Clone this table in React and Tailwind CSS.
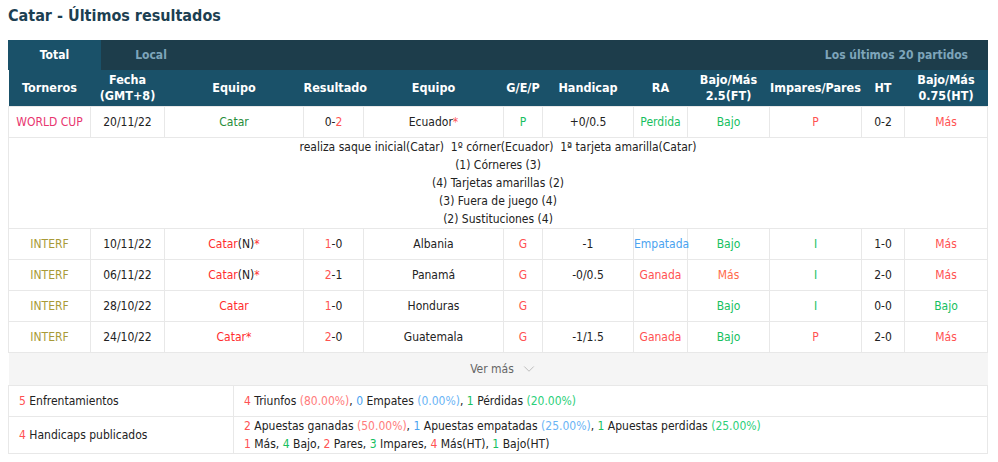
import React from "react";
import { ChevronDown } from "lucide-react";

const cols = [82, 74, 139, 60, 140, 39, 91, 54, 82, 92, 43, 83];

const heads = [
  ["Torneros"],
  ["Fecha", "(GMT+8)"],
  ["Equipo"],
  ["Resultado"],
  ["Equipo"],
  ["G/E/P"],
  ["Handicap"],
  ["RA"],
  ["Bajo/Más", "2.5(FT)"],
  ["Impares/Pares"],
  ["HT"],
  ["Bajo/Más", "0.75(HT)"],
];

const red = "text-[#ff5252]";
const green = "text-[#16c060]";
const blue = "text-[#4aa3f0]";

const rows = [
  {
    liga: "INTERF",
    fecha: "10/11/22",
    home: (
      <>
        <span className="text-[#ff2d2d]">Catar</span>
        <span>(N)</span>
        <span className="text-[#ff2d2d]">*</span>
      </>
    ),
    res: ["1", "0"],
    away: "Albania",
    gep: "G",
    hcp: "-1",
    ra: ["Empatada", blue],
    ou: ["Bajo", green],
    ip: ["I", green],
    ht: "1-0",
    ouht: ["Más", red],
  },
  {
    liga: "INTERF",
    fecha: "06/11/22",
    home: (
      <>
        <span className="text-[#ff2d2d]">Catar</span>
        <span>(N)</span>
        <span className="text-[#ff2d2d]">*</span>
      </>
    ),
    res: ["2", "1"],
    away: "Panamá",
    gep: "G",
    hcp: "-0/0.5",
    ra: ["Ganada", red],
    ou: ["Más", "text-[#ff6a4a]"],
    ip: ["I", green],
    ht: "2-0",
    ouht: ["Más", red],
  },
  {
    liga: "INTERF",
    fecha: "28/10/22",
    home: <span className="text-[#ff2d2d]">Catar</span>,
    res: ["1", "0"],
    away: "Honduras",
    gep: "G",
    hcp: "",
    ra: ["", ""],
    ou: ["Bajo", green],
    ip: ["I", green],
    ht: "0-0",
    ouht: ["Bajo", green],
  },
  {
    liga: "INTERF",
    fecha: "24/10/22",
    home: (
      <>
        <span className="text-[#ff2d2d]">Catar</span>
        <span className="text-[#ff2d2d]">*</span>
      </>
    ),
    res: ["2", "0"],
    away: "Guatemala",
    gep: "G",
    hcp: "-1/1.5",
    ra: ["Ganada", red],
    ou: ["Bajo", green],
    ip: ["P", red],
    ht: "2-0",
    ouht: ["Más", red],
  },
];

const td = "border border-[#e8e8e8] text-center h-[31px] p-0";

function Row({ r }) {
  return (
    <tr>
      <td className={`${td} text-[#a89a38]`}>{r.liga}</td>
      <td className={td}>{r.fecha}</td>
      <td className={td}>{r.home}</td>
      <td className={td}>
        <span className={red}>{r.res[0]}</span>-{r.res[1]}
      </td>
      <td className={td}>{r.away}</td>
      <td className={`${td} ${red}`}>{r.gep}</td>
      <td className={td}>{r.hcp}</td>
      <td className={`${td} ${r.ra[1]}`}>{r.ra[0]}</td>
      <td className={`${td} ${r.ou[1]}`}>{r.ou[0]}</td>
      <td className={`${td} ${r.ip[1]}`}>{r.ip[0]}</td>
      <td className={td}>{r.ht}</td>
      <td className={`${td} ${r.ouht[1]}`}>{r.ouht[0]}</td>
    </tr>
  );
}

export default function App() {
  return (
    <div className="w-[998px] h-[462px] bg-white text-[12px] text-[#222] font-['DejaVu_Sans_Condensed','DejaVu_Sans',sans-serif] font-stretch-condensed overflow-hidden">
      <div className="px-2 pt-[5px]">
        <h2 className="text-[16px] font-bold text-[#1c3f52] h-[35px] leading-[22px]">
          Catar - Últimos resultados
        </h2>

        <div className="w-[980px]">
          {/* Tabs */}
          <div className="flex h-[30px] bg-[#1d3d4b] font-bold text-[12px] items-stretch">
            <div className="w-[93px] bg-[#1a5169] text-white flex items-center justify-center">
              Total
            </div>
            <div className="w-[100px] text-[#7ea5ba] flex items-center justify-center">
              Local
            </div>
            <div className="flex-1 text-[#7ea5ba] flex items-center justify-end pr-5">
              Los últimos 20 partidos
            </div>
          </div>

          <table className="w-[980px] table-fixed border-collapse">
            <colgroup>
              {cols.map((w, i) => (
                <col key={i} style={{ width: w }} />
              ))}
            </colgroup>
            <thead>
              <tr className="bg-[#1a5169] text-white font-bold text-[12.5px]">
                {heads.map((h, i) => (
                  <th key={i} className="h-[36px] p-0 text-center leading-[16px]">
                    {h.map((l, j) => (
                      <div key={j}>{l}</div>
                    ))}
                  </th>
                ))}
              </tr>
            </thead>
            <tbody>
              <tr>
                <td className={`${td} text-[#e8356f]`}>WORLD CUP</td>
                <td className={td}>20/11/22</td>
                <td className={`${td} text-[#268c3a]`}>Catar</td>
                <td className={td}>
                  0-<span className={red}>2</span>
                </td>
                <td className={td}>
                  Ecuador<span className="text-[#ff5252]">*</span>
                </td>
                <td className={`${td} ${green}`}>P</td>
                <td className={td}>+0/0.5</td>
                <td className={`${td} ${green}`}>Perdida</td>
                <td className={`${td} ${green}`}>Bajo</td>
                <td className={`${td} ${red}`}>P</td>
                <td className={td}>0-2</td>
                <td className={`${td} ${red}`}>Más</td>
              </tr>
              <tr>
                <td colSpan={12} className="border border-[#e8e8e8] text-center leading-[18px] h-[91px] py-0">
                  <div>realiza saque inicial(Catar)&nbsp;&nbsp;1º córner(Ecuador)&nbsp;&nbsp;1ª tarjeta amarilla(Catar)</div>
                  <div>(1) Córneres (3)</div>
                  <div>(4) Tarjetas amarillas (2)</div>
                  <div>(3) Fuera de juego (4)</div>
                  <div>(2) Sustituciones (4)</div>
                </td>
              </tr>
              {rows.map((r, i) => (
                <Row key={i} r={r} />
              ))}
              <tr>
                <td colSpan={12} className="bg-[#f5f5f5] h-[33px] text-center text-[#666] p-0">
                  <span className="inline-flex items-center gap-[6px] pl-[12px]">
                    Ver más
                    <ChevronDown className="w-[18px] h-[18px] text-[#aaa]" strokeWidth={1} />
                  </span>
                </td>
              </tr>
            </tbody>
          </table>

          {/* Summary */}
          <table className="w-[980px] table-fixed border-collapse">
            <colgroup>
              <col style={{ width: 225 }} />
              <col />
            </colgroup>
            <tbody>
              <tr>
                <td className="border border-[#e8e8e8] h-[31px] pl-[10px] py-0">
                  <span className={red}>5</span> Enfrentamientos
                </td>
                <td className="border border-[#e8e8e8] pl-[10px] py-0">
                  <span className={red}>4</span> Triunfos <span className="text-[#ff7b7b]">(80.00%)</span>,{" "}
                  <span className={blue}>0</span> Empates <span className="text-[#6ab4f5]">(0.00%)</span>,{" "}
                  <span className={green}>1</span> Pérdidas <span className="text-[#2ccf7a]">(20.00%)</span>
                </td>
              </tr>
              <tr>
                <td className="border border-[#e8e8e8] h-[37px] pl-[10px] py-0">
                  <span className={red}>4</span> Handicaps publicados
                </td>
                <td className="border border-[#e8e8e8] pl-[10px] py-0 leading-[18px]">
                  <div>
                    <span className={red}>2</span> Apuestas ganadas <span className="text-[#ff7b7b]">(50.00%)</span>,{" "}
                    <span className={blue}>1</span> Apuestas empatadas <span className="text-[#6ab4f5]">(25.00%)</span>,{" "}
                    <span className={green}>1</span> Apuestas perdidas <span className="text-[#2ccf7a]">(25.00%)</span>
                  </div>
                  <div>
                    <span className={red}>1</span> Más, <span className={green}>4</span> Bajo,{" "}
                    <span className={red}>2</span> Pares, <span className={green}>3</span> Impares,{" "}
                    <span className={red}>4</span> Más(HT), <span className={green}>1</span> Bajo(HT)
                  </div>
                </td>
              </tr>
            </tbody>
          </table>
        </div>
      </div>
    </div>
  );
}
